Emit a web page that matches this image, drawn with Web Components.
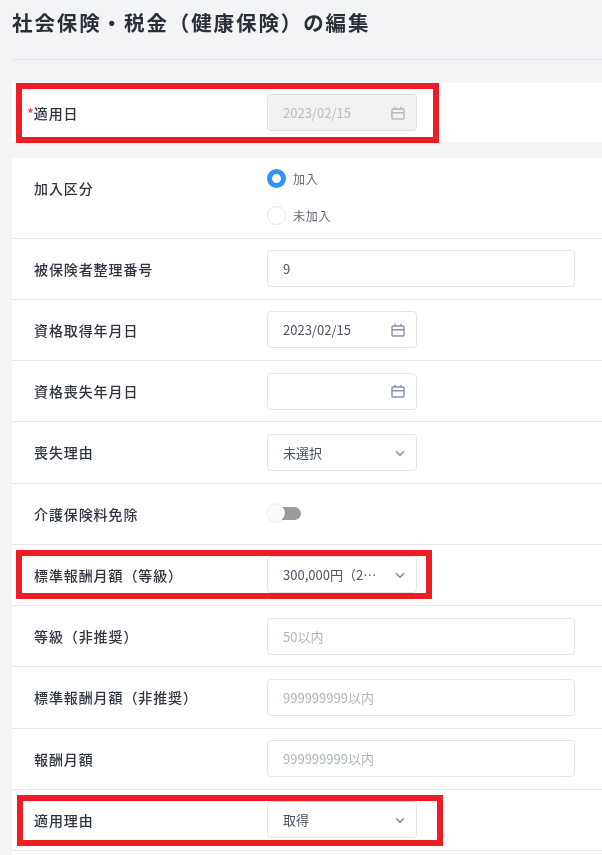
<!DOCTYPE html>
<html lang="ja">
<head>
<meta charset="utf-8">
<title>社会保険・税金（健康保険）の編集</title>
<style>
    html, body { margin: 0; background: #f3f4f6; }
    body {
        width: 602px;
        height: 855px;
        overflow: hidden;
        position: relative;
        font-family: "Noto Sans CJK JP", "Noto Sans", sans-serif;
        filter: blur(0.35px);
    }
</style>
</head>
<body>
<edit-page heading="社会保険・税金（健康保険）の編集">
    <form-card>
        <form-row label="適用日" required>
            <date-field value="2023/02/15" disabled></date-field>
        </form-row>
    </form-card>
    <form-card gap>
        <form-row label="加入区分" style="--row-height: 80.6px; --align: flex-start">
            <radio-group selected="加入" options="加入,未加入"></radio-group>
        </form-row>
        <form-row label="被保険者整理番号"><text-field value="9"></text-field></form-row>
        <form-row label="資格取得年月日"><date-field value="2023/02/15"></date-field></form-row>
        <form-row label="資格喪失年月日"><date-field></date-field></form-row>
        <form-row label="喪失理由"><select-field value="未選択"></select-field></form-row>
        <form-row label="介護保険料免除"><toggle-switch></toggle-switch></form-row>
        <form-row label="標準報酬月額（等級）"><select-field value="300,000円（22等級）"></select-field></form-row>
        <form-row label="等級（非推奨）"><text-field placeholder="50以内"></text-field></form-row>
        <form-row label="標準報酬月額（非推奨）"><text-field placeholder="999999999以内"></text-field></form-row>
        <form-row label="報酬月額"><text-field placeholder="999999999以内"></text-field></form-row>
        <form-row label="適用理由"><select-field value="取得"></select-field></form-row>
    </form-card>
</edit-page>
<mark-box style="left: 16px; top: 83px; width: 423px; height: 60px"></mark-box>
<mark-box style="left: 16px; top: 550px; width: 416px; height: 49px"></mark-box>
<mark-box style="left: 17px; top: 795px; width: 426px; height: 51px"></mark-box>

<script>
const FIELD_BOX = `
    box-sizing: border-box;
    height: 37px;
    border: 1px solid #e1e5ea;
    border-radius: 4px;
    background: #fff;
    display: flex;
    align-items: center;
    padding: 0 11px 0 15px;
    font-size: 13px;
    color: #4b5563;
`;

class EditPage extends HTMLElement {
    connectedCallback() {
        this.attachShadow({ mode: 'open' });
        this.shadowRoot.innerHTML = `
            <style>
                :host { display: block; padding-left: 12px; }
                header {
                    box-sizing: border-box;
                    height: 60px;
                    border-bottom: 1px solid #e2e4e8;
                    margin-bottom: 23px;
                    padding-top: 4px;
                    font-size: 20.5px;
                    line-height: 36px;
                    font-weight: 700;
                    letter-spacing: 1.9px;
                    color: #2b2f38;
                }
            </style>
            <header>${this.getAttribute('heading')}</header>
            <slot></slot>
        `;
    }
}

class FormCard extends HTMLElement {
    connectedCallback() {
        this.attachShadow({ mode: 'open' });
        this.shadowRoot.innerHTML = `
            <style>
                :host { display: block; background: #fff; }
                :host([gap]) { margin-top: 16px; height: 697px; }
            </style>
            <slot></slot>
        `;
    }
}

class FormRow extends HTMLElement {
    connectedCallback() {
        this.attachShadow({ mode: 'open' });
        const star = this.hasAttribute('required') ? '<span class="star">*</span>' : '';
        this.shadowRoot.innerHTML = `
            <style>
                :host {
                    box-sizing: border-box;
                    display: flex;
                    align-items: center;
                    height: var(--row-height, 61.25px);
                    border-bottom: 1px solid #e4e8ed;
                }
                :host([required]) { height: 59px; border-bottom: 0; }
                .label {
                    box-sizing: border-box;
                    width: 255px;
                    flex: none;
                    padding-left: 22px;
                    font-size: 14px;
                    font-weight: 500;
                    letter-spacing: 0.9px;
                    white-space: nowrap;
                    color: #2f3440;
                    align-self: var(--align, center);
                    margin-top: var(--label-top, 0);
                }
                :host([style*="flex-start"]) .label { margin-top: 20px; }
                .star { color: #ef4444; margin-left: -7px; letter-spacing: 0; }
                .control { flex: 1; min-width: 0; }
            </style>
            <div class="label">${star}${this.getAttribute('label')}</div>
            <div class="control"><slot></slot></div>
        `;
    }
}

class DateField extends HTMLElement {
    connectedCallback() {
        this.attachShadow({ mode: 'open' });
        this.shadowRoot.innerHTML = `
            <style>
                :host { display: block; width: 150px; }
                .box { ${FIELD_BOX} justify-content: space-between; }
                :host([disabled]) .box { background: #f2f2f2; border-color: #dcdee0; color: #b9bdc3; }
                :host([disabled]) svg { stroke: #b4b8bd; }
                svg { stroke: #8593a5; flex: none; margin-left: auto; }
            </style>
            <div class="box">
                <span>${this.getAttribute('value') || ''}</span>
                <svg width="14" height="14" viewBox="0 0 14 14" fill="none" stroke-width="1.4">
                    <rect x="1" y="3" width="12" height="10" rx="1"/>
                    <path d="M1 6.8H13M4 .8V3M10 .8V3"/>
                </svg>
            </div>
        `;
    }
}

class TextField extends HTMLElement {
    connectedCallback() {
        this.attachShadow({ mode: 'open' });
        const value = this.getAttribute('value');
        this.shadowRoot.innerHTML = `
            <style>
                :host { display: block; width: 308px; }
                .box { ${FIELD_BOX} }
                .empty { color: #aeb4bc; }
            </style>
            <div class="box">${value ? `<span>${value}</span>` : `<span class="empty">${this.getAttribute('placeholder') || ''}</span>`}</div>
        `;
    }
}

class SelectField extends HTMLElement {
    connectedCallback() {
        this.attachShadow({ mode: 'open' });
        this.shadowRoot.innerHTML = `
            <style>
                :host { display: block; width: 150px; }
                .box { ${FIELD_BOX} gap: 13px; }
                span { flex: 1; min-width: 0; overflow: hidden; white-space: nowrap; text-overflow: ellipsis; }
                svg { flex: none; stroke: #7f8a99; margin-top: 2px; }
            </style>
            <div class="box">
                <span>${this.getAttribute('value')}</span>
                <svg width="10" height="7" viewBox="0 0 10 7" fill="none" stroke-width="1.4"><path d="M1 1.2 5 5.2 9 1.2"/></svg>
            </div>
        `;
    }
}

class RadioGroup extends HTMLElement {
    connectedCallback() {
        this.attachShadow({ mode: 'open' });
        const selected = this.getAttribute('selected');
        const items = this.getAttribute('options').split(',').map(opt => `
            <div class="item">
                <i class="${opt === selected ? 'on' : ''}"></i><span>${opt}</span>
            </div>
        `).join('');
        this.shadowRoot.innerHTML = `
            <style>
                :host { display: flex; flex-direction: column; gap: 17px; margin-top: -1px; }
                .item { display: flex; align-items: center; gap: 7px; height: 20px; font-size: 12px; letter-spacing: 0.7px; color: #5f6875; }
                i { box-sizing: border-box; width: 19px; height: 19px; border-radius: 50%; border: 1px solid #e0e4ea; background: #fff; flex: none; }
                i.on { border: 5.5px solid #2f93fa; }
            </style>
            ${items}
        `;
    }
}

class ToggleSwitch extends HTMLElement {
    connectedCallback() {
        this.attachShadow({ mode: 'open' });
        this.shadowRoot.innerHTML = `
            <style>
                :host { display: block; position: relative; width: 34px; height: 19px; }
                .track { position: absolute; left: 3px; right: 0; top: 3px; height: 13px; border-radius: 7px; background: #9b9b9b; }
                .knob { position: absolute; left: 0; top: 0; box-sizing: border-box; width: 18px; height: 18px; border-radius: 50%; background: #fafafa; box-shadow: 0 0 2px rgba(0,0,0,.18); }
            </style>
            <div class="track"></div>
            <div class="knob"></div>
        `;
    }
}

// red annotation frames drawn over the screenshot
class MarkBox extends HTMLElement {
    connectedCallback() {
        this.attachShadow({ mode: 'open' });
        this.shadowRoot.innerHTML = `
            <style>
                :host { display: block; position: absolute; box-sizing: border-box; border: 6px solid #ee1c25; }
            </style>
        `;
    }
}

customElements.define('edit-page', EditPage);
customElements.define('form-card', FormCard);
customElements.define('form-row', FormRow);
customElements.define('date-field', DateField);
customElements.define('text-field', TextField);
customElements.define('select-field', SelectField);
customElements.define('radio-group', RadioGroup);
customElements.define('toggle-switch', ToggleSwitch);
customElements.define('mark-box', MarkBox);
</script>
</body>
</html>
